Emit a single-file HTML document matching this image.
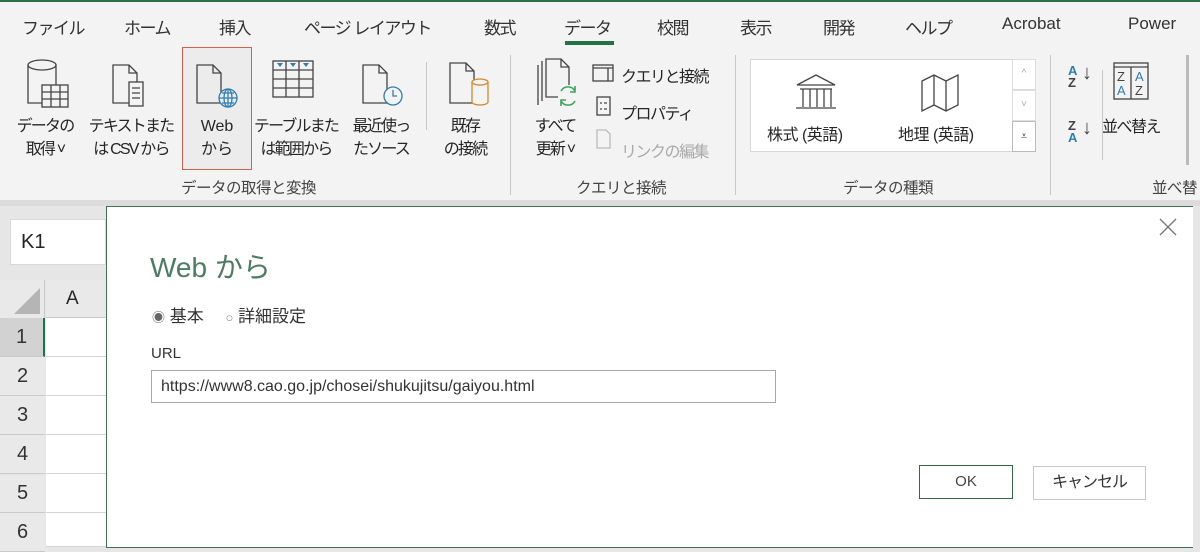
<!DOCTYPE html>
<html><head><meta charset="utf-8">
<style>
*{margin:0;padding:0;box-sizing:border-box}
body{width:1200px;height:551px;overflow:hidden;background:#e6e6e6;font-family:"Liberation Sans","Noto Sans CJK JP",sans-serif;color:#262626;position:relative}
.a{position:absolute;white-space:nowrap}
.tab{position:absolute;top:14px;font-size:17px;color:#333;letter-spacing:-1.5px}
.lbl{position:absolute;font-size:16px;line-height:23px;text-align:center;color:#262626;letter-spacing:-1.8px;white-space:nowrap}
.grp{position:absolute;top:176px;font-size:15.5px;color:#444;letter-spacing:-0.5px}
.sep{position:absolute;width:1px;background:#c8c8c8}
.rh{position:absolute;left:0;width:45px;height:39px;background:#e9e9e9;border-bottom:1px solid #c9c9c9;font-size:20px;text-align:center;line-height:39px;color:#333}
.cell{position:absolute;left:46px;width:60px;height:39px;background:#fff;border-bottom:1px solid #d4d4d4}
.sm{position:absolute;font-size:16px;letter-spacing:-1.5px}
</style></head><body>
<div class="a" style="left:0;top:0;width:1200px;height:206px;background:#f3f3f3;border-top:2px solid #2e6b47"></div>
<div class="tab" style="left:22px">ファイル</div>
<div class="tab" style="left:124px">ホーム</div>
<div class="tab" style="left:219px">挿入</div>
<div class="tab" style="left:304px">ページ レイアウト</div>
<div class="tab" style="left:484px">数式</div>
<div class="tab" style="left:564px">データ</div>
<div class="a" style="left:565px;top:41px;width:49px;height:4px;background:#217346"></div>
<div class="tab" style="left:657px">校閲</div>
<div class="tab" style="left:740px">表示</div>
<div class="tab" style="left:823px">開発</div>
<div class="tab" style="left:905px">ヘルプ</div>
<div class="tab" style="left:1002px;letter-spacing:0">Acrobat</div>
<div class="tab" style="left:1128px;letter-spacing:0">Power</div>

<div class="a" style="left:182px;top:47px;width:70px;height:123px;border:1px solid #d0644a;background:#ececec"></div>
<div class="a" style="left:750px;top:59px;width:286px;height:93px;background:#fff;border:1px solid #d6d6d6"></div>
<div class="a" style="left:1012px;top:59px;width:24px;height:31px;border:1px solid #ddd;font-size:10px;color:#aaa;text-align:center;line-height:28px">^</div>
<div class="a" style="left:1012px;top:90px;width:24px;height:31px;border:1px solid #ddd;font-size:10px;color:#aaa;text-align:center;line-height:28px">˅</div>
<div class="a" style="left:1012px;top:121px;width:24px;height:31px;border:1px solid #bbb;font-size:12px;color:#444;text-align:center;line-height:28px">⩡</div>

<svg class="a" style="left:0;top:55px" width="1200" height="110" fill="none" stroke="#444" stroke-width="1.3">
 <path d="M28 10 a14 5 0 0 1 28 0 v38 h-28 z"/><path d="M28 10 a14 5 0 0 0 28 0"/>
 <rect x="42" y="30" width="26" height="22" fill="#f3f3f3"/><path d="M42 37h26M42 44h26M51 30v22M60 30v22"/>
 <path d="M113 10h16l8 8v30h-24z M129 10v8h8"/><rect x="129" y="27" width="14" height="24" fill="#f3f3f3"/><path d="M132 33h8M132 38h8M132 43h8"/>
 <path d="M197 10h16l8 8v30h-24z M213 10v8h8"/>
 <circle cx="228" cy="43" r="9" stroke="#2e7db3" fill="#ececec"/><path d="M219 43h18M228 34v18M222 38h12M222 48h12" stroke="#2e7db3"/><ellipse cx="228" cy="43" rx="4" ry="9" stroke="#2e7db3"/>
 <rect x="273" y="6" width="40" height="36"/><path d="M273 15h40M273 24h40M273 33h40M286 6v36M299 6v36"/><path d="M277 8h6l-3 4zM290 8h6l-3 4zM303 8h6l-3 4z" fill="#2e7db3" stroke="none"/>
 <path d="M363 10h16l8 8v30h-24z M379 10v8h8"/><circle cx="393" cy="41" r="9" stroke="#2e7db3" fill="#f3f3f3"/><path d="M393 35v6h4" stroke="#2e7db3"/>
 <path d="M450 8h16l8 8v32h-24z M466 8v8h8"/><path d="M472 27a8 3 0 0 1 16 0v20a8 3 0 0 1-16 0z" stroke="#d4892c" fill="#f3f3f3"/><path d="M472 27a8 3 0 0 0 16 0" stroke="#d4892c"/>
 <path d="M538 10v40M542 6v40M546 4h15l8 8v30h-23z M561 4v8h8"/>
 <rect x="558" y="30" width="20" height="22" fill="#f3f3f3" stroke="none"/>
 <path d="M561 36a8 8 0 0 1 14 0M575 46a8 8 0 0 1-14 0" stroke="#3ba55c" stroke-width="1.6"/><path d="M575 31v6h-5M561 51v-6h5" stroke="#3ba55c" stroke-width="1.6"/>
 <rect x="593" y="10" width="20" height="16"/><path d="M593 13h20M608 13v13"/>
 <rect x="597" y="42" width="13" height="18"/><path d="M600 48h2M604 48h3M600 54h2M604 54h3"/>
 <path d="M597 75h9l4 4v14h-13z" stroke="#bbb"/>
 <path d="M797 30l19-10 19 10z M800 34h32 M803 34v18M810 34v18M817 34v18M824 34v18M831 34v18M796 53h40"/>
 <path d="M922 26l12-6 12 6 12-6v30l-12 6-12-6-12 6z M934 20v30M946 26v30"/>
 <rect x="1114" y="8" width="34" height="36"/><path d="M1114 12h34M1131 12v32"/>
</svg>
<div class="a" style="left:1068px;top:65px;font-size:13px;line-height:12px;color:#2e7db3;font-weight:bold">A<br><span style="color:#444">Z</span></div>
<div class="a" style="left:1082px;top:62px;font-size:20px;color:#444">↓</div>
<div class="a" style="left:1068px;top:120px;font-size:13px;line-height:12px;color:#444;font-weight:bold">Z<br><span style="color:#2e7db3">A</span></div>
<div class="a" style="left:1082px;top:117px;font-size:20px;color:#444">↓</div>
<div class="a" style="left:1117px;top:70px;font-size:13px;line-height:14px;color:#444">Z<br><span style="color:#2e7db3">A</span></div>
<div class="a" style="left:1135px;top:70px;font-size:13px;line-height:14px;color:#2e7db3">A<br><span style="color:#444">Z</span></div>

<div class="lbl" style="left:10px;top:115px;width:70px">データの<br>取得 ˅</div>
<div class="lbl" style="left:80px;top:115px;width:102px">テキストまた<br>は CSV から</div>
<div class="lbl" style="left:182px;top:115px;width:70px;letter-spacing:0">Web<br>から</div>
<div class="lbl" style="left:250px;top:115px;width:92px">テーブルまた<br>は範囲から</div>
<div class="lbl" style="left:342px;top:115px;width:78px">最近使っ<br>たソース</div>
<div class="lbl" style="left:430px;top:115px;width:70px">既存<br>の接続</div>
<div class="lbl" style="left:520px;top:115px;width:70px">すべて<br>更新 ˅</div>
<div class="sm" style="left:621px;top:63px">クエリと接続</div>
<div class="sm" style="left:621px;top:100px">プロパティ</div>
<div class="sm" style="left:621px;top:138px;color:#aaa">リンクの編集</div>
<div class="sm" style="left:767px;top:121px;letter-spacing:-0.5px">株式 (英語)</div>
<div class="sm" style="left:898px;top:121px;letter-spacing:-0.5px">地理 (英語)</div>
<div class="sm" style="left:1102px;top:113px">並べ替え</div>

<div class="grp" style="left:181px">データの取得と変換</div>
<div class="grp" style="left:576px">クエリと接続</div>
<div class="grp" style="left:843px">データの種類</div>
<div class="grp" style="left:1152px">並べ替</div>
<div class="sep" style="left:426px;top:62px;height:68px"></div>
<div class="sep" style="left:510px;top:55px;height:140px"></div>
<div class="sep" style="left:735px;top:55px;height:140px"></div>
<div class="sep" style="left:1050px;top:55px;height:140px"></div>
<div class="sep" style="left:1102px;top:70px;height:90px"></div>
<div class="sep" style="left:1186px;top:55px;height:110px;width:3px;background:#bbb"></div>
<div class="a" style="left:0;top:200px;width:1200px;height:6px;background:#dcdcdc"></div>

<div class="a" style="left:10px;top:219px;width:96px;height:46px;background:#fff;border:1px solid #d8d8d8;font-size:20px;line-height:44px;padding-left:10px">K1</div>
<div class="a" style="left:0;top:280px;width:45px;height:38px;background:#e9e9e9;border-right:1px solid #c9c9c9"></div>
<svg class="a" style="left:14px;top:288px" width="28" height="26"><path d="M26 0V26H0z" fill="#b5b5b5"/></svg>
<div class="a" style="left:46px;top:280px;width:60px;height:38px;background:#e9e9e9;font-size:19px;line-height:38px;padding-left:20px;border-bottom:1px solid #c9c9c9">A</div>
<div class="rh" style="top:318px;background:#d2d2d2;border-right:2px solid #217346">1</div>
<div class="rh" style="top:357px">2</div>
<div class="rh" style="top:396px">3</div>
<div class="rh" style="top:435px">4</div>
<div class="rh" style="top:474px">5</div>
<div class="rh" style="top:513px">6</div>
<div class="cell" style="top:318px"></div><div class="cell" style="top:357px"></div><div class="cell" style="top:396px"></div><div class="cell" style="top:435px"></div><div class="cell" style="top:474px"></div><div class="cell" style="top:513px;height:34px"></div>

<div class="a" style="left:106px;top:206px;width:1087px;height:342px;background:#fff;border:1px solid #3f7352;border-right:none"></div>
<svg class="a" style="left:1159px;top:218px" width="18" height="18"><path d="M1 1L17 17M17 1L1 17" stroke="#777" stroke-width="1.3"/></svg>
<div class="a" style="left:150px;top:246px;font-size:28px;color:#4d7c62">Web から</div>
<div class="a" style="left:152px;top:302px;font-size:17px;color:#333"><span style="font-size:13px;color:#666">◉</span> 基本　 <span style="font-size:13px;color:#888">○</span> 詳細設定</div>
<div class="a" style="left:151px;top:345px;font-size:15px;color:#333">URL</div>
<div class="a" style="left:151px;top:370px;width:625px;height:33px;border:1px solid #a8a8a8;font-size:16px;line-height:31px;padding-left:9px;color:#333">https://www8.cao.go.jp/chosei/shukujitsu/gaiyou.html</div>
<div class="a" style="left:919px;top:465px;width:94px;height:34px;border:1.5px solid #2e6b47;font-size:15px;line-height:31px;text-align:center;color:#444">OK</div>
<div class="a" style="left:1033px;top:466px;width:113px;height:34px;border:1px solid #c8c8c8;font-size:16px;line-height:32px;text-align:center;color:#333;letter-spacing:-1px">キャンセル</div>
</body></html>
